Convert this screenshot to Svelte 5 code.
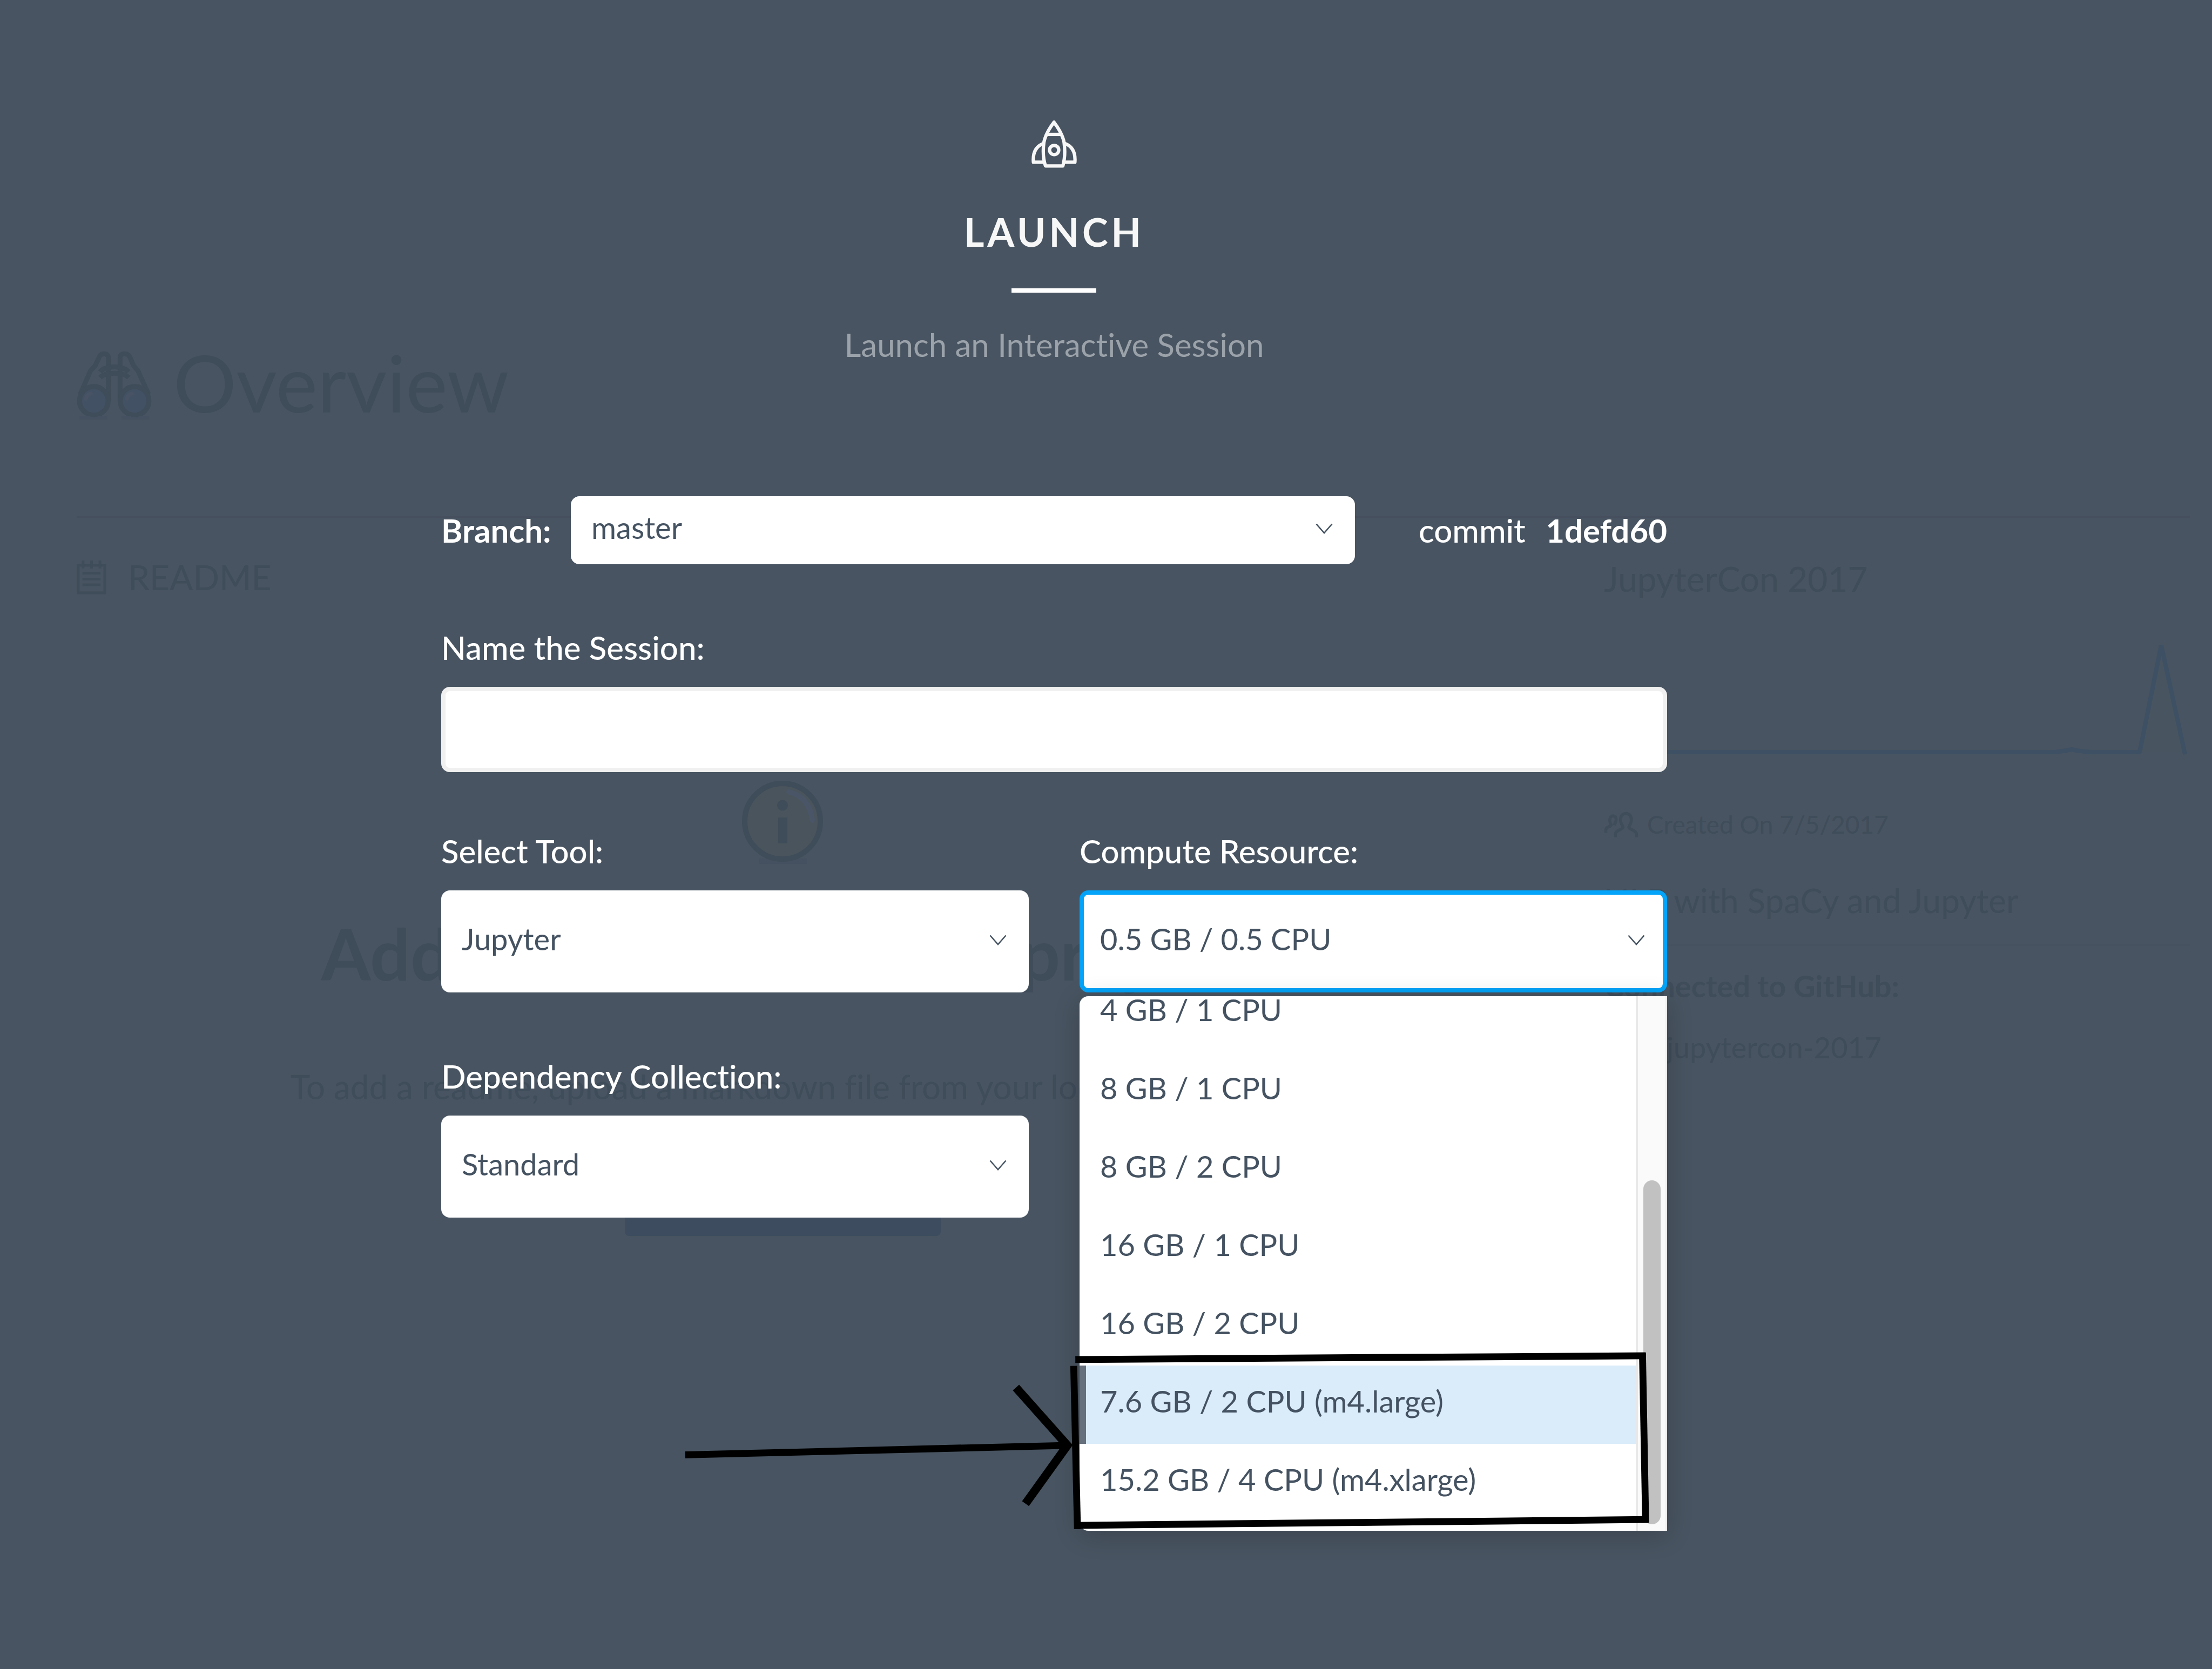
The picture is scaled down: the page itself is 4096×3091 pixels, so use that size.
<script lang="ts">
  let branch = $state('master');
  let sessionName = $state('');
  let tool = $state('Jupyter');
  let dependency = $state('Standard');
  let resource = $state('0.5 GB / 0.5 CPU');

  const resources = [
    '4 GB / 1 CPU',
    '8 GB / 1 CPU',
    '8 GB / 2 CPU',
    '16 GB / 1 CPU',
    '16 GB / 2 CPU',
    '7.6 GB / 2 CPU (m4.large)',
    '15.2 GB / 4 CPU (m4.xlarge)'
  ];
  let active = $state('7.6 GB / 2 CPU (m4.large)');
</script>

{#snippet chevron()}
  <svg class="chevron" viewBox="0 0 32 20" aria-hidden="true">
    <path d="M1.5 1.5 L16 18 L30.5 1.5" fill="none" stroke="currentColor" stroke-width="2.6" />
  </svg>
{/snippet}

<div class="stage">
  <div class="page" aria-hidden="true">
    <div class="page-head">
      <svg class="binoculars" viewBox="46 2 424 426">
        <g fill="none" stroke="currentColor" stroke-width="27" stroke-linejoin="round">
          <path d="M225 320 V72 Q222 54 200 54 Q180 54 174 72 L150 122 L124 150 L66 282" />
          <path d="M291 320 V72 Q294 54 316 54 Q338 54 346 72 L368 122 L392 150 L452 282" />
          <path d="M178 156 Q200 128 258 128 Q316 128 340 156" />
          <path d="M178 188 Q200 164 258 164 Q316 164 340 188" />
        </g>
        <circle cx="143" cy="320" r="81" fill="#425163" stroke="currentColor" stroke-width="28" />
        <circle cx="373" cy="320" r="81" fill="#425163" stroke="currentColor" stroke-width="28" />
        <path d="M98 308 Q102 284 126 278" fill="none" stroke="#485465" stroke-width="22" stroke-linecap="round" />
        <path d="M330 308 Q334 284 358 278" fill="none" stroke="#485465" stroke-width="22" stroke-linecap="round" />
        <path d="M62 404 H112 Q143 420 174 404 H218 V426 H62 Z M300 404 H342 Q373 420 404 404 H456 V426 H300 Z" fill="#455160" />
      </svg>
      <h1>Overview</h1>
    </div>
    <div class="page-body">
      <section class="readme">
        <div class="readme-title">
          <svg class="note" viewBox="0 0 56 64">
            <path d="M3 9 H53 V61 H3 Z" fill="none" stroke="currentColor" stroke-width="5" />
            <path d="M12 0 V15 M28 0 V15 M44 0 V15" stroke="currentColor" stroke-width="5" />
            <path d="M11 24 H45 M11 35 H45 M11 46 H45" stroke="currentColor" stroke-width="5" />
          </svg>
          <h2>README</h2>
        </div>
        <svg class="info" viewBox="0 0 152 158">
          <rect x="32" y="146" width="90" height="10" fill="#455160" />
          <circle cx="76" cy="76" r="71" fill="#49545c" stroke="currentColor" stroke-width="10" />
          <circle cx="76" cy="46" r="10" fill="currentColor" />
          <rect x="68" y="69" width="17" height="48" fill="currentColor" />
          <path d="M88 21 Q126 30 132 74" fill="none" stroke="#4a5667" stroke-width="10" stroke-linecap="round" />
        </svg>
        <h3>Add a readme to your project</h3>
        <p>To add a readme, upload a markdown file from your local computer.</p>
        <span class="upload"></span>
      </section>
      <section class="summary">
        <h2>JupyterCon 2017</h2>
        <svg class="activity" viewBox="0 0 1085 220">
          <path d="M992 213 L1032 15 L1076 213 Z" fill="#485560" />
          <path d="M0 213 H829 Q848 212 866 208 Q884 212 905 213 H992 L1032 15 L1076 217" fill="none" stroke="#3e5064" stroke-width="8" stroke-linejoin="bevel" />
        </svg>
        <div class="created">
          <svg class="people" viewBox="40 64 196 146">
            <g fill="none" stroke="currentColor" stroke-width="17">
              <path d="M105 210 V192 Q106 178 122 171 L140 162 Q152 155 146 144 Q134 128 134 110 Q136 75 165 75 Q194 75 196 110 Q196 128 184 144 Q178 155 190 162 L208 171 Q224 178 225 192 V210" />
              <path d="M51 184 V168 Q52 156 66 150 L76 146 Q84 140 78 132 Q72 122 74 106 Q78 88 92 88 Q108 90 109 106 Q110 122 102 132 L100 142" />
            </g>
          </svg>
          <span>Created On 7/5/2017</span>
        </div>
        <p class="about">NLP with SpaCy and Jupyter</p>
        <h4>Connected to GitHub:</h4>
        <p class="repo">jupytercon-2017</p>
      </section>
    </div>
  </div>

  <main class="overlay">
    <header>
      <svg class="rocket" viewBox="60 52 256 268" aria-hidden="true">
        <g fill="none" stroke="currentColor" stroke-width="19" stroke-linejoin="round">
          <path d="M187 62 Q140 124 130 176 Q120 250 139 309 H237 Q254 250 244 176 Q234 124 187 62 Z" />
          <path d="M148 131 H226" />
          <path d="M128 182 Q64 206 71 288 H134" />
          <path d="M248 182 Q312 206 305 288 H242" />
          <circle cx="188" cy="219" r="26" />
        </g>
      </svg>
      <h2>LAUNCH</h2>
      <span class="rule"></span>
      <p>Launch an Interactive Session</p>
    </header>

    <form onsubmit={(e) => e.preventDefault()}>
      <div class="branch-row">
        <label class="strong" for="branch">Branch:</label>
        <div class="select short">
          <select id="branch" bind:value={branch}>
            <option>master</option>
          </select>
          {@render chevron()}
        </div>
        <div class="commit">
          <span>commit</span>
          <span class="strong">1defd60</span>
        </div>
      </div>

      <div class="field">
        <label for="session">Name the Session:</label>
        <input id="session" type="text" bind:value={sessionName} />
      </div>

      <div class="columns">
        <div class="field">
          <label for="tool">Select Tool:</label>
          <div class="select">
            <select id="tool" bind:value={tool}>
              <option>Jupyter</option>
            </select>
            {@render chevron()}
          </div>
        </div>

        <div class="field">
          <label for="resource">Compute Resource:</label>
          <div class="select open">
            <select id="resource" bind:value={resource}>
              <option>0.5 GB / 0.5 CPU</option>
              {#each resources as item}
                <option>{item}</option>
              {/each}
            </select>
            {@render chevron()}
            <div class="menu">
              <ul role="listbox" aria-label="Compute Resource">
                {#each resources as item}
                  <li role="option" aria-selected={item === resource} class:active={item === active} onmouseenter={() => (active = item)}>{item}</li>
                {/each}
              </ul>
              <div class="track"><span class="thumb"></span></div>
            </div>
            <svg class="marks" viewBox="1280 2540 1840 350" aria-hidden="true">
              <g fill="none" stroke="#000" stroke-width="13">
                <path d="M2028 2564 L3104 2557" />
                <path d="M3098 2551 L3104 2872" />
                <path d="M2026 2877 L3109 2866" />
                <path d="M2025 2576 L2032 2884" />
                <path d="M1292 2744 L2016 2726" />
                <path d="M1916 2617 L2013 2726 L1934 2836" stroke-width="16" />
              </g>
            </svg>
          </div>
        </div>

        <div class="field">
          <label for="dependency">Dependency Collection:</label>
          <div class="select">
            <select id="dependency" bind:value={dependency}>
              <option>Standard</option>
            </select>
            {@render chevron()}
          </div>
        </div>
      </div>
    </form>
  </main>
</div>

<style>
  :global(body) {
    margin: 0;
    background: #485461;
  }

  .stage {
    display: grid;
    min-height: 100vh;
    overflow: hidden;
    background: #485461;
    font-family: Lato, 'Open Sans', sans-serif;
    font-size: 56px;
    font-variant-ligatures: none;
    line-height: 80px;
  }

  .page,
  .overlay {
    grid-area: 1 / 1;
    min-width: 0;
  }

  h1, h2, h3, h4, p, ul {
    margin: 0;
    padding: 0;
    font-weight: 400;
  }

  svg {
    display: block;
    flex: none;
  }

  /* Dimmed page behind the dialog */
  .page {
    padding: 624px 41px 0 142px;
    color: #3f4c59;
  }

  .page-head {
    display: flex;
    align-items: center;
    gap: 40px;
    padding-bottom: 164px;
    border-bottom: 3px solid #454f5d;
  }

  .binoculars {
    width: 139px;
    height: 140px;
  }

  h1 {
    font-size: 146px;
    line-height: 168px;
  }

  .page-body {
    display: grid;
    grid-template-columns: minmax(0, 2614fr) minmax(0, 1085fr);
    gap: 214px;
    padding-top: 70px;
  }

  .page-body h2 {
    font-size: 64px;
    line-height: 80px;
  }

  .readme {
    display: flex;
    flex-direction: column;
    align-items: center;
  }

  .readme-title {
    display: flex;
    align-items: center;
    gap: 40px;
    align-self: stretch;
  }

  .note {
    width: 55px;
    height: 63px;
  }

  .info {
    width: 150px;
    height: 156px;
    margin-top: 337px;
  }

  h3 {
    margin-top: 88px;
    font-size: 132px;
    font-weight: 700;
    line-height: 150px;
    white-space: nowrap;
  }

  .readme p {
    margin-top: 132px;
    font-size: 62px;
    white-space: nowrap;
  }

  .upload {
    width: 585px;
    height: 119px;
    margin-top: 118px;
    border-radius: 8px;
    background: #3d4d5f;
  }

  .summary {
    padding-top: 3px;
  }

  .activity {
    width: 100%;
    margin-top: 68px;
  }

  .created {
    display: flex;
    align-items: center;
    gap: 16px;
    margin-top: 97px;
    font-size: 46px;
    line-height: 60px;
  }

  .people {
    width: 64px;
    height: 48px;
  }

  .about {
    margin-top: 70px;
    padding-bottom: 42px;
    border-bottom: 3px solid #465260;
    font-size: 62px;
  }

  h4 {
    margin-top: 34px;
    font-weight: 700;
  }

  .repo {
    margin-top: 34px;
    padding-left: 116px;
    font-size: 54px;
  }

  /* Launch dialog */
  .overlay {
    display: flex;
    flex-direction: column;
    align-items: center;
    padding: 223px 192px 0 0;
    color: #fff;
  }

  header {
    display: flex;
    flex-direction: column;
    align-items: center;
  }

  .rocket {
    width: 84px;
    height: 88px;
    color: #f7f7f7;
  }

  header h2 {
    margin-top: 74px;
    color: #f7f7f7;
    font-size: 72px;
    font-weight: 700;
    line-height: 88px;
    letter-spacing: 6px;
  }

  .rule {
    width: 157px;
    height: 8px;
    margin-top: 61px;
    background: #fff;
  }

  header p {
    margin-top: 56px;
    color: #9ba2aa;
    font-size: 60px;
  }

  form {
    width: 2270px;
    max-width: 100%;
    margin-top: 241px;
    font-size: 60px;
    font-weight: 500;
  }

  .branch-row {
    display: flex;
    align-items: center;
  }

  .strong {
    font-weight: 700;
  }

  .branch-row label {
    flex: none;
    width: 240px;
  }

  .branch-row .select {
    flex: 1;
  }

  .commit {
    display: flex;
    justify-content: space-between;
    width: 460px;
    margin-left: 118px;
  }

  .field {
    display: flex;
    flex-direction: column;
    gap: 33px;
    min-width: 0;
  }

  form > .field {
    margin-top: 114px;
  }

  .columns {
    display: grid;
    grid-template-columns: repeat(2, minmax(0, 1fr));
    column-gap: 94px;
    row-gap: 115px;
    margin-top: 106px;
  }

  input {
    box-sizing: border-box;
    width: 100%;
    height: 158px;
    padding: 0 28px;
    border: 8px solid #f0f0f0;
    border-radius: 16px;
    background: #fff;
    color: #445261;
    font: inherit;
    outline: none;
  }

  .select {
    position: relative;
    color: #445261;
    font-size: 56px;
    font-weight: 400;
  }

  select {
    appearance: none;
    display: block;
    box-sizing: border-box;
    width: 100%;
    height: 189px;
    padding: 0 100px 10px 30px;
    border: 8px solid #fff;
    border-radius: 16px;
    background: #fff;
    color: inherit;
    font: inherit;
    outline: none;
  }

  .short select {
    height: 126px;
  }

  .open select {
    border-color: #03a4f9;
  }

  .chevron {
    position: absolute;
    top: 0;
    right: 41px;
    bottom: 6px;
    width: 32px;
    height: 20px;
    margin: auto 0;
    pointer-events: none;
  }

  .menu {
    position: absolute;
    top: 100%;
    right: 0;
    left: 0;
    display: grid;
    grid-template-columns: minmax(0, 1fr) 58px;
    height: 990px;
    margin-top: 7px;
    overflow: hidden;
    border-radius: 16px 0 0 16px;
    background: #fff;
    box-shadow: 0 8px 48px rgba(0, 0, 0, 0.2);
  }

  ul {
    display: flex;
    flex-direction: column;
    justify-content: flex-end;
    min-height: 0;
    overflow: hidden;
    padding-bottom: 16px;
    list-style: none;
  }

  li {
    flex: none;
    box-sizing: border-box;
    height: 145px;
    padding: 26px 38px 0;
    white-space: nowrap;
  }

  li.active {
    background: #daecfa;
    box-shadow: inset 12px 0 #66707c;
  }

  .track {
    box-sizing: border-box;
    display: flex;
    align-items: flex-end;
    justify-content: center;
    padding-bottom: 12px;
    border-right: 3px solid #ededed;
    border-left: 4px solid #e8e8e8;
    background: #fafafa;
  }

  .thumb {
    width: 32px;
    height: 637px;
    border-radius: 16px;
    background: #c1c1c1;
  }

  .marks {
    position: absolute;
    top: 845px;
    left: -742px;
    width: 1806px;
    height: 344px;
    pointer-events: none;
  }
</style>
